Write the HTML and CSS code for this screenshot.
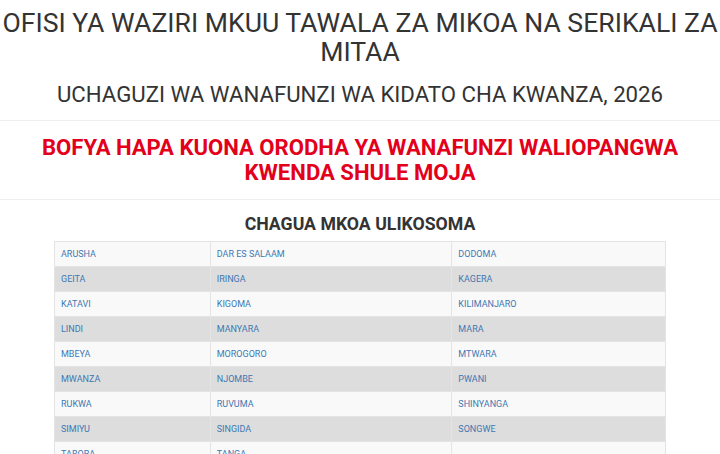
FILE: index.html
```html
<!DOCTYPE html>
<html>
<head>
<meta charset="utf-8">
<link rel="stylesheet" href="styles.css">
</head>
<body>
<header class="head">
  <h1 class="title">OFISI YA WAZIRI MKUU TAWALA ZA MIKOA NA SERIKALI ZA MITAA</h1>
  <h2 class="subtitle">UCHAGUZI WA WANAFUNZI WA KIDATO CHA KWANZA, 2026</h2>
</header>
<hr class="rule">
<a class="notice" href="#">BOFYA HAPA KUONA ORODHA YA WANAFUNZI WALIOPANGWA KWENDA SHULE MOJA</a>
<hr class="rule">
<h3 class="choose">CHAGUA MKOA ULIKOSOMA</h3>
<table class="regions">
  <colgroup><col class="c1"><col class="c2"><col class="c3"></colgroup>
  <tbody>
    <tr><td><a href="#">ARUSHA</a></td><td><a href="#">DAR ES SALAAM</a></td><td><a href="#">DODOMA</a></td></tr>
    <tr><td><a href="#">GEITA</a></td><td><a href="#">IRINGA</a></td><td><a href="#">KAGERA</a></td></tr>
    <tr><td><a href="#">KATAVI</a></td><td><a href="#">KIGOMA</a></td><td><a href="#">KILIMANJARO</a></td></tr>
    <tr><td><a href="#">LINDI</a></td><td><a href="#">MANYARA</a></td><td><a href="#">MARA</a></td></tr>
    <tr><td><a href="#">MBEYA</a></td><td><a href="#">MOROGORO</a></td><td><a href="#">MTWARA</a></td></tr>
    <tr><td><a href="#">MWANZA</a></td><td><a href="#">NJOMBE</a></td><td><a href="#">PWANI</a></td></tr>
    <tr><td><a href="#">RUKWA</a></td><td><a href="#">RUVUMA</a></td><td><a href="#">SHINYANGA</a></td></tr>
    <tr><td><a href="#">SIMIYU</a></td><td><a href="#">SINGIDA</a></td><td><a href="#">SONGWE</a></td></tr>
    <tr><td><a href="#">TABORA</a></td><td><a href="#">TANGA</a></td><td></td></tr>
  </tbody>
</table>
</body>
</html>
```
FILE: styles.css
```css
html, body {
  margin: 0;
  padding: 0;
  background: #fff;
}
body {
  font-family: Roboto, "Liberation Sans", sans-serif;
  color: #333;
  text-align: center;
}
.head {
  padding-top: 9px;
}
.title {
  font-size: 26.6px;
  font-weight: 400;
  line-height: 28.5px;
  margin: 0;
  color: #333;
}
.subtitle {
  font-size: 22.2px;
  font-weight: 400;
  line-height: 28px;
  margin: 13.5px 0 0;
  color: #333;
}
.rule {
  border: 0;
  border-top: 1px solid #eee;
  margin: 12px 0 0;
  height: 0;
}
.notice {
  display: block;
  color: #e3001b;
  font-weight: 700;
  font-size: 22.1px;
  line-height: 25px;
  text-decoration: none;
  padding: 14px 0 14px;
}
.notice + .rule {
  margin-top: 0;
}
.choose {
  font-size: 17.7px;
  font-weight: 700;
  line-height: 22px;
  margin: 13px 0 6px;
  color: #333;
}
.regions {
  width: 85%;
  margin: 0 auto;
  border-collapse: collapse;
  text-align: left;
  font-size: 9px;
}
.c1 { width: 156px; }
.c2 { width: 242px; }
.c3 { width: 214px; }
.regions td {
  border: 1px solid #e4e4e4;
  padding: 0 6px;
  height: 24px;
  line-height: 24px;
}
.regions tr:nth-child(odd) td {
  background: #f9f9f9;
}
.regions tr:nth-child(even) td {
  background: #dddddd;
}
.regions a {
  color: #3e78b2;
  text-decoration: none;
}
```
